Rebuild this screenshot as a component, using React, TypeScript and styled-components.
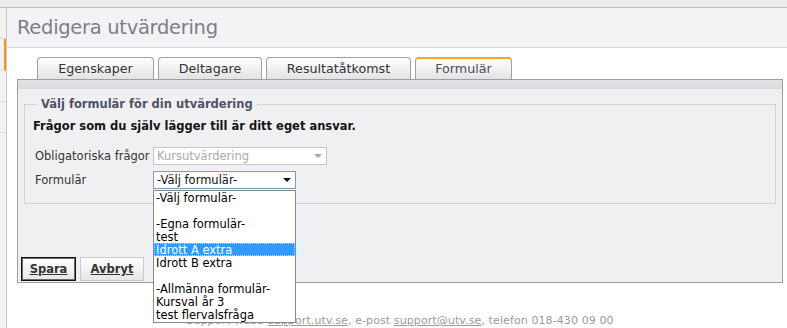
import React from "react";
import styled, { createGlobalStyle, css } from "styled-components";

const Global = createGlobalStyle`
  html, body { margin: 0; padding: 0; }
  body {
    background: #ededee;
    font-family: "DejaVu Sans", Verdana, sans-serif;
    width: 787px;
    height: 328px;
    overflow: hidden;
  }
  * { box-sizing: border-box; }
`;

const TopBar = styled.div`
  height: 8px;
  background: #ededee;
  border-bottom: 1px solid #bdbdbd;
`;

const Body = styled.div`
  display: flex;
  height: 320px;
`;

const Sidebar = styled.div`
  width: 7px;
  background: #f2f2f2;
  border-right: 1px solid #c8c8c8;
  display: flex;
  flex-direction: column;
`;

const SideItem = styled.div<{ $h: number; $active?: boolean }>`
  height: ${(p) => p.$h}px;
  border-bottom: 1px solid #dcdcdc;
  ${(p) =>
    p.$active &&
    css`
      border-right: 2px solid #f7941d;
    `}
`;

const Main = styled.div`
  flex: 1;
  display: flex;
  flex-direction: column;
  background: #fff;
`;

const Header = styled.div`
  height: 40px;
  background: #f3f3f5;
  border-bottom: 1px solid #d6d6d6;
  padding-left: 10px;
`;

const Title = styled.h1`
  margin: 0;
  font-weight: normal;
  font-size: 19.5px;
  letter-spacing: -0.3px;
  line-height: 39px;
  color: #7a7f88;
`;

const Content = styled.div`
  padding: 9px 4px 0 10px;
  display: flex;
  flex-direction: column;
`;

const Tabs = styled.div`
  display: flex;
  gap: 4px;
  padding-left: 20px;
  height: 22px;
  align-items: flex-end;
`;

const Tab = styled.div<{ $w: number; $active?: boolean }>`
  width: ${(p) => p.$w}px;
  height: 22px;
  border: 1px solid #a0a0a0;
  border-bottom: none;
  border-radius: 4px 4px 0 0;
  background: linear-gradient(#fefefe, #e3e3e5);
  font-size: 12.7px;
  line-height: 21px;
  text-align: center;
  color: #333;
  ${(p) =>
    p.$active &&
    css`
      border-top: 2px solid #f4a23a;
      line-height: 20px;
      color: #4a4f5a;
    `}
`;

const Panel = styled.div`
  border: 1px solid #9e9e9e;
  background: #f0f0f2;
`;

const PanelStrip = styled.div`
  height: 9px;
  background: linear-gradient(#e3e3e5, #d8d9dc);
`;

const PanelBody = styled.div`
  padding: 8px 6px 1px 6px;
  display: flex;
  flex-direction: column;
`;

const Fieldset = styled.fieldset`
  margin: 0;
  border: 1px solid #d3d3d3;
  padding: 8px 8px 14px 8px;
  min-width: 0;
`;

const Legend = styled.legend`
  margin-left: 4px;
  padding: 0 4px;
  font-weight: bold;
  font-size: 11.5px;
  color: #4c5366;
`;

const Warning = styled.div`
  font-weight: bold;
  font-size: 11.5px;
  line-height: 14px;
  color: #141414;
`;

const FormGrid = styled.div`
  margin-top: 14px;
  padding-left: 2px;
  display: grid;
  grid-template-columns: 118px auto;
  row-gap: 6px;
  align-items: center;
`;

const Label = styled.label`
  font-size: 11.5px;
  line-height: 18px;
  color: #333;
`;

const SelectWrap = styled.div`
  position: relative;
  justify-self: start;
`;

const Select = styled.div<{ $w: number; $disabled?: boolean }>`
  width: ${(p) => p.$w}px;
  height: 18px;
  background: #fff;
  border: 1px solid ${(p) => (p.$disabled ? "#c6c6c6" : "#7f9db9")};
  color: ${(p) => (p.$disabled ? "#a9a9a9" : "#111")};
  font-size: 11.5px;
  line-height: 16px;
  padding-left: 3px;
  display: flex;
  align-items: center;
  justify-content: space-between;
`;

const Arrow = styled.span<{ $disabled?: boolean }>`
  width: 0;
  height: 0;
  margin-right: 4px;
  border-left: 4px solid transparent;
  border-right: 4px solid transparent;
  border-top: 4px solid ${(p) => (p.$disabled ? "#a8a8a8" : "#111")};
`;

const DropList = styled.ul`
  position: absolute;
  top: calc(100% + 1px);
  left: 0;
  width: 100%;
  margin: 0;
  padding: 0 0 1px 0;
  list-style: none;
  background: #fff;
  border: 1px solid #8a8a8a;
  z-index: 10;
`;

const Option = styled.li<{ $selected?: boolean }>`
  height: 13px;
  font-size: 11.5px;
  line-height: 14px;
  padding-left: 2px;
  color: #000;
  white-space: nowrap;
  ${(p) =>
    p.$selected &&
    css`
      background: #3399ff;
      color: #fff;
      outline: 1px dotted #ffd27f;
      outline-offset: -1px;
    `}
`;

const ButtonRow = styled.div`
  margin-top: 53px;
  margin-left: -3px;
  display: flex;
  gap: 4px;
`;

const Button = styled.button<{ $w: number; $default?: boolean }>`
  width: ${(p) => p.$w}px;
  height: 24px;
  padding: 0;
  font-family: inherit;
  font-weight: bold;
  font-size: 11.5px;
  color: #333;
  text-decoration: underline;
  background: linear-gradient(#ffffff, #e6e6e8);
  border: 1px solid #c8c8c8;
  ${(p) =>
    p.$default &&
    css`
      border: 1px solid #111;
      box-shadow: inset 0 0 0 1px #6c6c6c;
    `}
`;

const Footer = styled.div`
  margin-top: 31px;
  text-align: center;
  font-size: 11px;
  letter-spacing: 0.1px;
  line-height: 13px;
  color: #9a9a9a;
  a {
    color: #9a9a9a;
    text-decoration: underline;
  }
`;

const options = [
  "-Välj formulär-",
  "",
  "-Egna formulär-",
  "test",
  "Idrott A extra",
  "Idrott B extra",
  "",
  "-Allmänna formulär-",
  "Kursval år 3",
  "test flervalsfråga",
];

export default function App() {
  return (
    <>
      <Global />
      <TopBar />
      <Body>
        <Sidebar>
          <SideItem $h={31} />
          <SideItem $h={32} $active />
          <SideItem $h={31} />
          <SideItem $h={31} />
        </Sidebar>
        <Main>
          <Header>
            <Title>Redigera utvärdering</Title>
          </Header>
          <Content>
            <Tabs>
              <Tab $w={117}>Egenskaper</Tab>
              <Tab $w={104}>Deltagare</Tab>
              <Tab $w={145}>Resultatåtkomst</Tab>
              <Tab $w={97} $active>
                Formulär
              </Tab>
            </Tabs>
            <Panel>
              <PanelStrip />
              <PanelBody>
                <Fieldset>
                  <Legend>Välj formulär för din utvärdering</Legend>
                  <Warning>Frågor som du själv lägger till är ditt eget ansvar.</Warning>
                  <FormGrid>
                    <Label>Obligatoriska frågor</Label>
                    <SelectWrap>
                      <Select $w={174} $disabled>
                        Kursutvärdering
                        <Arrow $disabled />
                      </Select>
                    </SelectWrap>
                    <Label>Formulär</Label>
                    <SelectWrap>
                      <Select $w={143}>
                        -Välj formulär-
                        <Arrow />
                      </Select>
                      <DropList>
                        {options.map((o, i) => (
                          <Option key={i} $selected={o === "Idrott A extra"}>
                            {o}
                          </Option>
                        ))}
                      </DropList>
                    </SelectWrap>
                  </FormGrid>
                </Fieldset>
                <ButtonRow>
                  <Button $w={55} $default>
                    Spara
                  </Button>
                  <Button $w={64}>Avbryt</Button>
                </ButtonRow>
              </PanelBody>
            </Panel>
            <Footer>
              Support webb <a>support.utv.se</a>, e-post <a>support@utv.se</a>, telefon 018-430 09 00
            </Footer>
          </Content>
        </Main>
      </Body>
    </>
  );
}
